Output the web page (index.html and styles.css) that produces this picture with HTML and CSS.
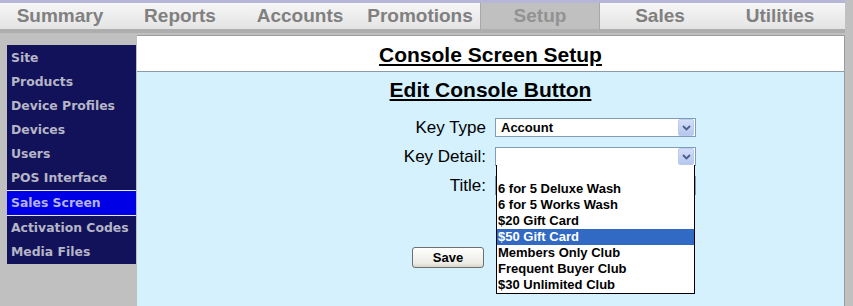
FILE: index.html
```html
<!DOCTYPE html>
<html lang="en">
<head>
  <meta charset="UTF-8" />
  <title>Console Screen Setup</title>
  <link rel="stylesheet" href="styles.css">
</head>
<body>

<div class="tabs">
  <div class="tab">Summary</div>
  <div class="tab">Reports</div>
  <div class="tab">Accounts</div>
  <div class="tab">Promotions</div>
  <div class="tab active">Setup</div>
  <div class="tab">Sales</div>
  <div class="tab">Utilities</div>
  <div class="tab-fill"></div>
</div>

<div class="main">
  <!-- Setup sub menu -->
  <ul class="side">
    <li>Site</li>
    <li>Products</li>
    <li>Device Profiles</li>
    <li>Devices</li>
    <li>Users</li>
    <li>POS Interface</li>
    <li class="current">Sales Screen</li>
    <li>Activation Codes</li>
    <li>Media Files</li>
  </ul>

  <div class="panel">
    <div class="panel-head">
      <h1>Console Screen Setup</h1>
    </div>
    <div class="panel-body">
      <h2>Edit Console Button</h2>

      <div class="form">
        <label>Key Type</label>
        <div class="select">
          <span class="value">Account</span>
          <span class="arrow"><svg width="9" height="6" viewBox="0 0 9 6"><polyline points="1,1 4.5,4.5 8,1" fill="none" stroke="#4a5f8c" stroke-width="1.8"/></svg></span>
        </div>

        <label>Key Detail:</label>
        <div class="select-wrap">
          <div class="select">
            <span class="value"></span>
            <span class="arrow"><svg width="9" height="6" viewBox="0 0 9 6"><polyline points="1,1 4.5,4.5 8,1" fill="none" stroke="#4a5f8c" stroke-width="1.8"/></svg></span>
          </div>
          <ul class="list">
            <li>&nbsp;</li>
            <li>6 for 5 Deluxe Wash</li>
            <li>6 for 5 Works Wash</li>
            <li>$20 Gift Card</li>
            <li class="hover">$50 Gift Card</li>
            <li>Members Only Club</li>
            <li>Frequent Buyer Club</li>
            <li>$30 Unlimited Club</li>
          </ul>
        </div>

        <label>Title:</label>
        <div class="input"></div>

        <div class="save-cell"><button class="button">Save</button></div>
        <div></div>
      </div>
    </div>
  </div>
</div>

</body>
</html>
```

FILE: styles.css
```css
body {
  margin: 0;
  background: #c0c0c0;
  font-family: 'Liberation Sans', Arial, sans-serif;
  color: #000;
  overflow: hidden;
}

.tabs {
  display: flex;
  width: 845px;
  border-top: 3px solid #b6b6d6;
  border-bottom: 4px solid #aeaeae;
  background: linear-gradient(to bottom, #f6f6f6, #e4e4e4);
}

.tab {
  width: 120px;
  height: 26px;
  line-height: 26px;
  text-align: center;
  font-size: 19px;
  font-weight: bold;
  color: #808080;
}

.tab.active {
  background: #c0c0c0;
  color: #929292;
  box-shadow: inset 1px 0 #a8a8a8, inset -1px 0 #a8a8a8;
}

.tab-fill {
  flex: 1;
}

.main {
  display: flex;
  align-items: flex-start;
  padding-top: 2px;
}

.side {
  list-style: none;
  margin: 10px 0 0 7px;
  padding: 1px 0 0;
  width: 129px;
  background: #12125a;
  font-family: 'DejaVu Sans', Verdana, sans-serif;
  font-size: 12.4px;
  font-weight: bold;
  color: #b6b6c6;
}

.side li {
  height: 24px;
  line-height: 24px;
  padding-left: 4px;
  white-space: nowrap;
  overflow: hidden;
}

.side li.current {
  background: #0000e6;
  border-top: 1px solid #e8e8f8;
  border-bottom: 1px solid #e8e8f8;
  color: #b4b4e6;
}

.panel {
  margin-left: 1px;
  width: 707px;
  height: 270px;
  border-top: 1px solid #9c9c9c;
  border-right: 1px solid #9c9c9c;
  background: #d5f1fd;
}

.panel-head {
  background: #fff;
  padding: 7px 0 4px;
  border-bottom: 1px solid #8b9aa8;
  text-align: center;
}

h1, h2 {
  margin: 0;
  font-size: 21px;
  line-height: 24px;
  font-weight: bold;
  text-decoration: underline;
  text-align: center;
}

.panel-body {
  padding-top: 6px;
}

.form {
  display: grid;
  grid-template-columns: 349px 201px;
  column-gap: 9px;
  row-gap: 10px;
  margin-top: 16px;
}

.form label {
  justify-self: end;
  align-self: center;
  font-size: 17px;
  line-height: 19px;
}

.select {
  position: relative;
  box-sizing: border-box;
  height: 19px;
  border: 1px solid #7f9db9;
  background: #fff;
}

.select .value {
  display: block;
  padding-left: 5px;
  line-height: 17px;
  font-size: 13px;
  font-weight: bold;
}

.arrow {
  position: absolute;
  top: 0;
  right: 1px;
  width: 14px;
  height: 15px;
  border: 1px solid #bccbee;
  border-radius: 2px;
  background: linear-gradient(to bottom, #d4def8, #b6c7ef);
  display: flex;
  align-items: center;
  justify-content: center;
}

.select-wrap {
  position: relative;
}

.list {
  position: absolute;
  top: 18px;
  left: 1px;
  right: 1px;
  z-index: 5;
  list-style: none;
  margin: 0;
  padding: 0;
  background: #fff;
  border: 1px solid #000;
  border-top: none;
}

.list li {
  height: 16px;
  line-height: 16px;
  padding-left: 1px;
  font-size: 13px;
  font-weight: bold;
  white-space: nowrap;
}

.list li.hover {
  background: #316ac5;
  color: #fff;
}

.input {
  box-sizing: border-box;
  height: 19px;
  border: 1px solid #7f9db9;
  background: #fff;
}

.save-cell {
  justify-self: end;
  margin: 42px 2px 0 0;
}

.button {
  width: 72px;
  height: 21px;
  padding: 0;
  border: 1px solid #6f6f6f;
  border-radius: 3px;
  background: linear-gradient(to bottom, #ffffff, #ecebe4 80%, #d8d6cc);
  font-family: 'Liberation Sans', Arial, sans-serif;
  font-size: 13px;
  font-weight: bold;
  color: #000;
}
```
